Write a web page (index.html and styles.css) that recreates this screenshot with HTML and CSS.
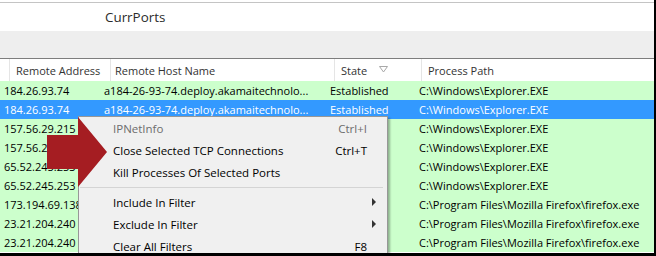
FILE: index.html
```html
<!DOCTYPE html>
<html>
<head>
<meta charset="utf-8">
<link rel="stylesheet" href="styles.css">
</head>
<body>
<div class="window">
  <div class="titlebar"><span class="title">CurrPorts</span></div>
  <div class="toolbar"></div>
  <div class="header">
    <div class="hcell h0"></div>
    <div class="hcell h1">Remote Address</div>
    <div class="hcell h2">Remote Host Name</div>
    <div class="hcell h3">State <svg class="sort" width="9" height="7" viewBox="0 0 9 7"><path d="M0.5 0.5 H8.5 L4.5 6 Z" fill="none" stroke="#a8a8a8" stroke-width="1"/></svg></div>
    <div class="hcell h4">Process Path</div>
  </div>
  <div class="rows">
    <div class="row"><span>184.26.93.74</span><span>a184-26-93-74.deploy.akamaitechnolo...</span><span>Established</span><span>C:\Windows\Explorer.EXE</span></div>
    <div class="row sel"><span>184.26.93.74</span><span>a184-26-93-74.deploy.akamaitechnolo...</span><span>Established</span><span>C:\Windows\Explorer.EXE</span></div>
    <div class="row"><span>157.56.29.215</span><span></span><span></span><span>C:\Windows\Explorer.EXE</span></div>
    <div class="row"><span>157.56.29.215</span><span></span><span></span><span>C:\Windows\Explorer.EXE</span></div>
    <div class="row"><span>65.52.245.253</span><span></span><span></span><span>C:\Windows\Explorer.EXE</span></div>
    <div class="row"><span>65.52.245.253</span><span></span><span></span><span>C:\Windows\Explorer.EXE</span></div>
    <div class="row"><span>173.194.69.138</span><span></span><span></span><span>C:\Program Files\Mozilla Firefox\firefox.exe</span></div>
    <div class="row"><span>23.21.204.240</span><span></span><span></span><span>C:\Program Files\Mozilla Firefox\firefox.exe</span></div>
    <div class="row"><span>23.21.204.240</span><span></span><span></span><span>C:\Program Files\Mozilla Firefox\firefox.exe</span></div>
  </div>

  <div class="menu">
    <div class="mi disabled"><span>IPNetInfo</span><span class="key">Ctrl+I</span></div>
    <div class="mi"><span>Close Selected TCP Connections</span><span class="key">Ctrl+T</span></div>
    <div class="mi"><span>Kill Processes Of Selected Ports</span></div>
    <div class="msep"></div>
    <div class="mi"><span>Include In Filter</span><span class="sub"></span></div>
    <div class="mi"><span>Exclude In Filter</span><span class="sub"></span></div>
    <div class="mi"><span>Clear All Filters</span><span class="key">F8</span></div>
  </div>

  <svg class="arrow" width="656" height="256" viewBox="0 0 656 256">
    <polygon points="47,135 78,135 78,117 107,152 78,187 78,169 47,169" fill="#a51d22"/>
  </svg>
</div>
</body>
</html>
```

FILE: styles.css
```css
* { box-sizing: border-box; }
html, body { margin: 0; padding: 0; }
body {
  width: 656px;
  height: 256px;
  overflow: hidden;
  background: #fff;
  font-family: "Open Sans", sans-serif;
  font-size: 11px;
  color: #000;
}
.window {
  position: relative;
  width: 656px;
  height: 256px;
  border-right: 2px solid #000;
  border-bottom: 3px solid #000;
  overflow: hidden;
}
.titlebar {
  border-top: 1px solid #c4c4c4;
  margin-top: 2px;
  padding-left: 105px;
  display: flex;
  align-items: center;
  height: 29px;
}
.title {
  font-size: 13.4px;
  color: #2b2b2b;
}
.toolbar {
  height: 28px;
  background: #eeeeee;
  border-bottom: 1px solid #7d7d7d;
}
.header {
  height: 22px;
  display: flex;
  color: #333;
}
.hcell {
  display: flex;
  align-items: center;
  border-left: 1px solid #e5e5e5;
  white-space: nowrap;
}
.h0 { width: 9px; border-left: none; }
.h1 { width: 101px; padding-left: 6px; }
.h2 { width: 224px; padding-left: 4px; }
.h3 { width: 87px; padding-left: 6px; }
.h3 .sort { margin-left: 12px; margin-top: -2px; }
.h4 { flex: 1; padding-left: 6px; }
.rows { display: flex; flex-direction: column; }
.row {
  height: 19px;
  display: grid;
  grid-template-columns: 100px 226px 89px 1fr;
  align-items: center;
  background: #ccffcc;
  white-space: nowrap;
}
.row span { padding-left: 4px; overflow: hidden; }
.row.sel { background: #3399ff; color: #fff; }
.menu {
  position: absolute;
  left: 78px;
  top: 116px;
  width: 310px;
  height: 160px;
  background: #f0f0f0;
  border: 1px solid #979797;
  box-shadow: 2px 2px 2px rgba(0,0,0,0.3);
  display: flex;
  flex-direction: column;
  font-size: 11.5px;
}
.mi {
  height: 22px;
  flex: none;
  display: flex;
  align-items: center;
  justify-content: space-between;
  padding-left: 34px;
  padding-right: 20px;
  white-space: nowrap;
}
.mi.disabled { color: #6d6d6d; }
.key { color: inherit; }
.sub {
  width: 0;
  height: 0;
  border-top: 4px solid transparent;
  border-bottom: 4px solid transparent;
  border-left: 4px solid #333;
  margin-right: -9px;
}
.msep {
  height: 8px;
  flex: none;
  display: flex;
  align-items: center;
  padding-left: 1px;
  padding-right: 4px;
}
.msep::before {
  content: "";
  display: block;
  flex: 1;
  height: 1px;
  background: #d4d4d4;
}
.arrow {
  position: absolute;
  left: 0;
  top: 0;
  pointer-events: none;
}
```
